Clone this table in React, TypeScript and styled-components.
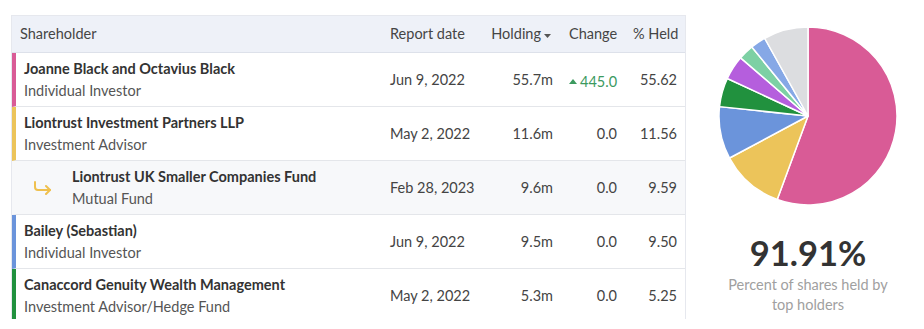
import React from "react";
import styled, { createGlobalStyle } from "styled-components";

const GlobalStyle = createGlobalStyle`
  body {
    margin: 0;
    background: #fff;
    font-family: Lato, "Open Sans", sans-serif;
    color: #333;
  }
`;

const Page = styled.div`
  display: flex;
  align-items: flex-start;
  padding: 15px 0 0 11px;
  gap: 9px;
`;

const Table = styled.div`
  width: 675px;
  height: 304px;
  overflow: hidden;
  border: 1px solid #e6e8ee;
  border-bottom: none;
  box-sizing: border-box;
`;

const Grid = styled.div`
  display: grid;
  grid-template-columns: 1fr 97px 82px 64px 60px;
  align-items: center;
`;

const HeadRow = styled(Grid)`
  height: 37px;
  box-sizing: border-box;
  padding-bottom: 1px;
  background: #eef1f8;
  border-bottom: 1px solid #dde1ea;
  font-size: 14.5px;
  color: #454545;
`;

const HeadCell = styled.div<{ $right?: boolean }>`
  padding: 0 8px;
  text-align: ${(p) => (p.$right ? "right" : "left")};
  white-space: nowrap;
`;

const Caret = styled.span`
  display: inline-block;
  margin-left: 3px;
  margin-right: 2px;
  vertical-align: middle;
  line-height: 0;
`;

const Row = styled(Grid)<{ $bar?: string; $sub?: boolean }>`
  height: 54px;
  box-sizing: border-box;
  border-bottom: 1px solid #e4e6ea;
  border-left: 4px solid ${(p) => p.$bar || "transparent"};
  background: ${(p) => (p.$sub ? "#f7f8fa" : "#fff")};
  font-size: 14.5px;
  color: #444;
`;

const NameCell = styled.div<{ $indent?: boolean }>`
  display: flex;
  align-items: center;
  padding-left: ${(p) => (p.$indent ? "17px" : "8px")};
  gap: 19px;
`;

const NameBlock = styled.div`
  display: flex;
  flex-direction: column;
  line-height: 22px;
`;

const Name = styled.div`
  font-weight: 700;
  color: #333;
`;

const Kind = styled.div`
  color: #555;
`;

const Cell = styled.div<{ $right?: boolean }>`
  padding: 0 8px;
  text-align: ${(p) => (p.$right ? "right" : "left")};
  white-space: nowrap;
`;

const Up = styled.span`
  color: #3c9a5f;
  display: inline-flex;
  align-items: center;
  gap: 3px;
`;

const Side = styled.div`
  width: 226px;
  display: flex;
  flex-direction: column;
  align-items: center;
  padding-top: 10px;
`;

const Big = styled.div`
  margin-top: 26px;
  font-size: 34.5px;
  font-weight: 700;
  color: #333;
  line-height: 40px;
`;

const Caption = styled.div`
  margin-top: 2px;
  width: 166px;
  text-align: center;
  font-size: 14.5px;
  line-height: 20px;
  color: #a0a0a0;
`;

const rows = [
  { name: "Joanne Black and Octavius Black", kind: "Individual Investor", date: "Jun 9, 2022", holding: "55.7m", change: "445.0", held: "55.62", bar: "#d95b96" },
  { name: "Liontrust Investment Partners LLP", kind: "Investment Advisor", date: "May 2, 2022", holding: "11.6m", change: "0.0", held: "11.56", bar: "#ecc45a" },
  { name: "Liontrust UK Smaller Companies Fund", kind: "Mutual Fund", date: "Feb 28, 2023", holding: "9.6m", change: "0.0", held: "9.59", sub: true },
  { name: "Bailey (Sebastian)", kind: "Individual Investor", date: "Jun 9, 2022", holding: "9.5m", change: "0.0", held: "9.50", bar: "#6b94db" },
  { name: "Canaccord Genuity Wealth Management", kind: "Investment Advisor/Hedge Fund", date: "May 2, 2022", holding: "5.3m", change: "0.0", held: "5.25", bar: "#21913e" },
];

const slices = [
  { v: 55.62, c: "#d95b96" },
  { v: 11.56, c: "#ecc45a" },
  { v: 9.5, c: "#6b94db" },
  { v: 5.25, c: "#21913e" },
  { v: 4.4, c: "#b55edd" },
  { v: 2.8, c: "#7dd0a4" },
  { v: 2.78, c: "#86a8e6" },
  { v: 8.09, c: "#dcdde0" },
];

const Pie = () => {
  const cx = 91;
  const cy = 91;
  const r = 89;
  let acc = 0;
  return (
    <svg width="182" height="182" viewBox="0 0 182 182">
      {slices.map((s, i) => {
        const a0 = (acc / 100) * Math.PI * 2 - Math.PI / 2;
        acc += s.v;
        const a1 = (acc / 100) * Math.PI * 2 - Math.PI / 2;
        const large = a1 - a0 > Math.PI ? 1 : 0;
        const d = `M${cx} ${cy} L${cx + r * Math.cos(a0)} ${cy + r * Math.sin(a0)} A${r} ${r} 0 ${large} 1 ${cx + r * Math.cos(a1)} ${cy + r * Math.sin(a1)} Z`;
        return <path key={i} d={d} fill={s.c} stroke="#fff" strokeWidth="1.5" strokeLinejoin="round" />;
      })}
    </svg>
  );
};

const SubArrow = () => (
  <svg width="20" height="14" viewBox="0 0 20 14" fill="none" stroke="#efc04e" strokeWidth="2" strokeLinecap="round" strokeLinejoin="round">
    <path d="M2 1v5q0 3 3 3h12" />
    <path d="M13 5l4 4-4 4" />
  </svg>
);

export default function App() {
  return (
    <>
      <GlobalStyle />
      <Page>
        <Table>
          <HeadRow>
            <HeadCell>Shareholder</HeadCell>
            <HeadCell>Report date</HeadCell>
            <HeadCell $right>
              Holding
              <Caret>
                <svg width="7" height="4" viewBox="0 0 7 4">
                  <path d="M0 0h7L3.5 4z" fill="#555" />
                </svg>
              </Caret>
            </HeadCell>
            <HeadCell $right>Change</HeadCell>
            <HeadCell $right>% Held</HeadCell>
          </HeadRow>
          {rows.map((r) => (
            <Row key={r.name} $bar={r.bar} $sub={r.sub}>
              <NameCell $indent={r.sub}>
                {r.sub && <SubArrow />}
                <NameBlock>
                  <Name>{r.name}</Name>
                  <Kind>{r.kind}</Kind>
                </NameBlock>
              </NameCell>
              <Cell>{r.date}</Cell>
              <Cell $right>{r.holding}</Cell>
              <Cell $right>
                {r.change !== "0.0" ? (
                  <Up>
                    <svg width="8" height="5" viewBox="0 0 8 5">
                      <path d="M0 5h8L4 0z" fill="#3c9a5f" />
                    </svg>
                    {r.change}
                  </Up>
                ) : (
                  r.change
                )}
              </Cell>
              <Cell $right>{r.held}</Cell>
            </Row>
          ))}
        </Table>
        <Side>
          <Pie />
          <Big>91.91%</Big>
          <Caption>Percent of shares held by top holders</Caption>
        </Side>
      </Page>
    </>
  );
}
